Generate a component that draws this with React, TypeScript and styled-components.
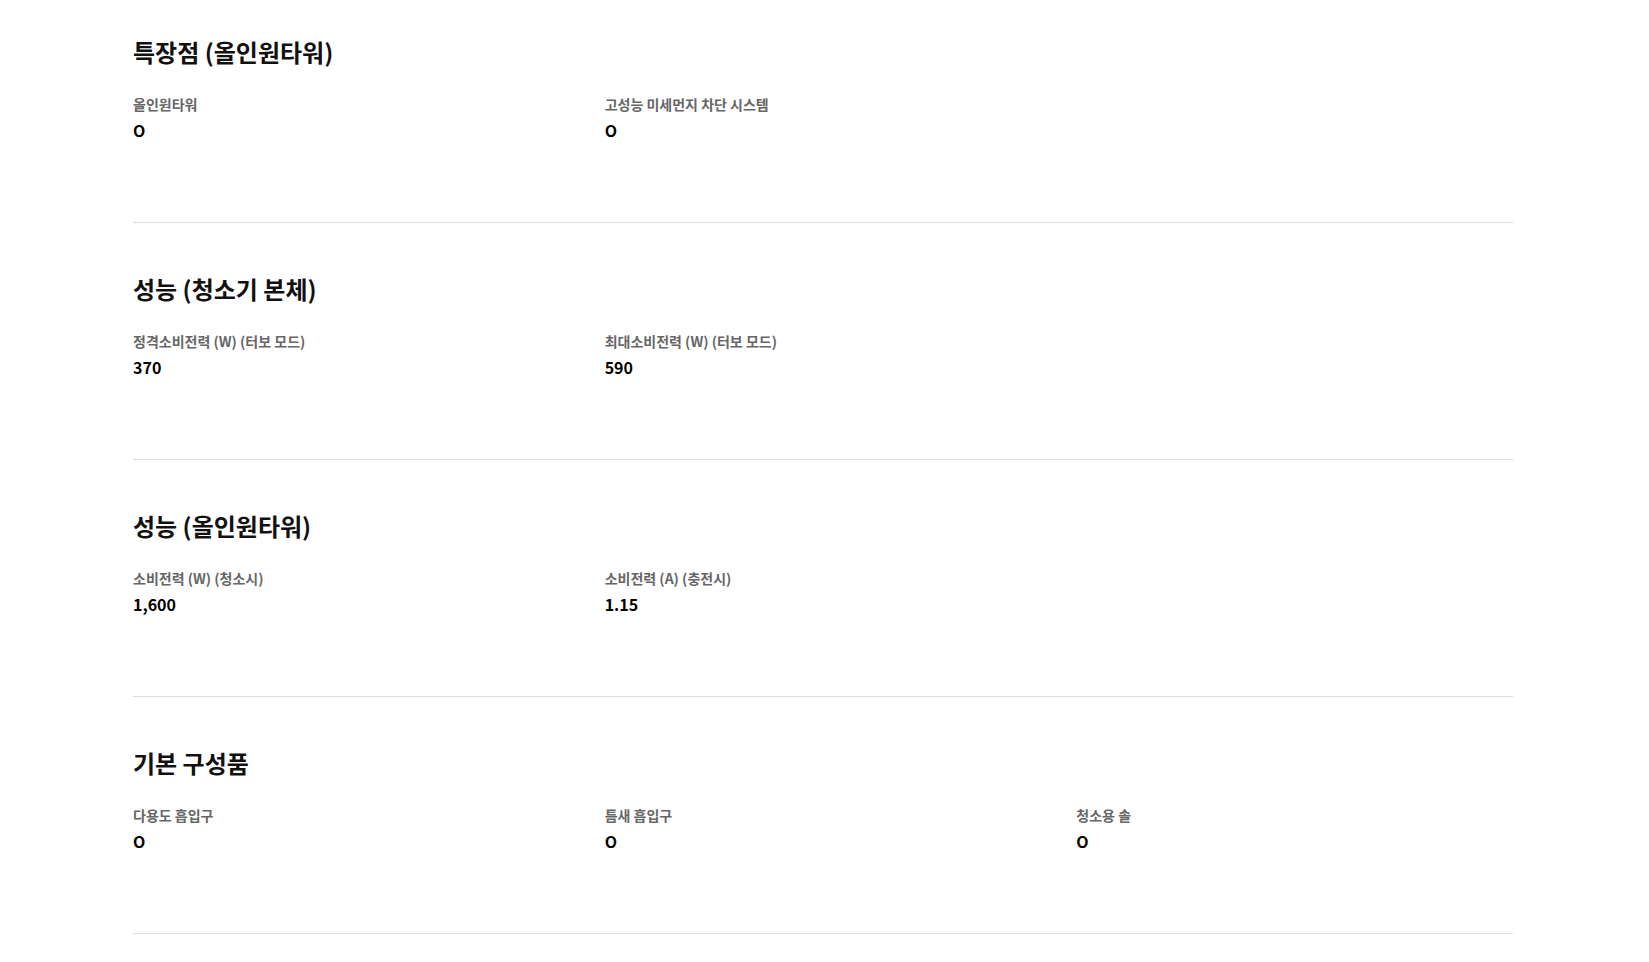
import { createGlobalStyle } from 'styled-components'
import styled from 'styled-components'

const GlobalStyle = createGlobalStyle`
  html, body {
    margin: 0;
    padding: 0;
    background: #fff;
  }
  body {
    font-family: 'Noto Sans CJK KR', 'Noto Sans', sans-serif;
    color: #111;
  }
`

const Page = styled.div`
  width: 1380px;
  padding-left: 133px;
`

const Section = styled.section`
  padding: 48px 0 80px;
  border-bottom: 1px solid #ddd;

  &:first-child {
    padding-top: 34px;
  }
`

const Title = styled.h3`
  margin: 0;
  font-size: 24px;
  line-height: 36px;
  font-weight: 700;
  color: #111;
`

const SpecGrid = styled.dl`
  display: grid;
  grid-template-columns: repeat(3, 1fr);
  column-gap: 35px;
  margin: 24px 0 0;
`

const SpecItem = styled.div`
  display: flex;
  flex-direction: column;
  gap: 4px;
`

const Label = styled.dt`
  font-size: 14px;
  line-height: 20px;
  font-weight: 700;
  color: #666;
`

const Value = styled.dd`
  margin: 0;
  font-size: 16px;
  line-height: 24px;
  font-weight: 700;
  color: #000;
`

interface Spec {
  label: string
  value: string
}

interface SpecGroup {
  title: string
  specs: Spec[]
}

const groups: SpecGroup[] = [
  {
    title: '특장점 (올인원타워)',
    specs: [
      { label: '올인원타워', value: 'O' },
      { label: '고성능 미세먼지 차단 시스템', value: 'O' },
    ],
  },
  {
    title: '성능 (청소기 본체)',
    specs: [
      { label: '정격소비전력 (W) (터보 모드)', value: '370' },
      { label: '최대소비전력 (W) (터보 모드)', value: '590' },
    ],
  },
  {
    title: '성능 (올인원타워)',
    specs: [
      { label: '소비전력 (W) (청소시)', value: '1,600' },
      { label: '소비전력 (A) (충전시)', value: '1.15' },
    ],
  },
  {
    title: '기본 구성품',
    specs: [
      { label: '다용도 흡입구', value: 'O' },
      { label: '틈새 흡입구', value: 'O' },
      { label: '청소용 솔', value: 'O' },
    ],
  },
]

export default function App() {
  return (
    <>
      <GlobalStyle />
      <Page>
        {groups.map(group => (
          <Section key={group.title}>
            <Title>{group.title}</Title>
            <SpecGrid>
              {group.specs.map(spec => (
                <SpecItem key={spec.label}>
                  <Label>{spec.label}</Label>
                  <Value>{spec.value}</Value>
                </SpecItem>
              ))}
            </SpecGrid>
          </Section>
        ))}
      </Page>
    </>
  )
}
